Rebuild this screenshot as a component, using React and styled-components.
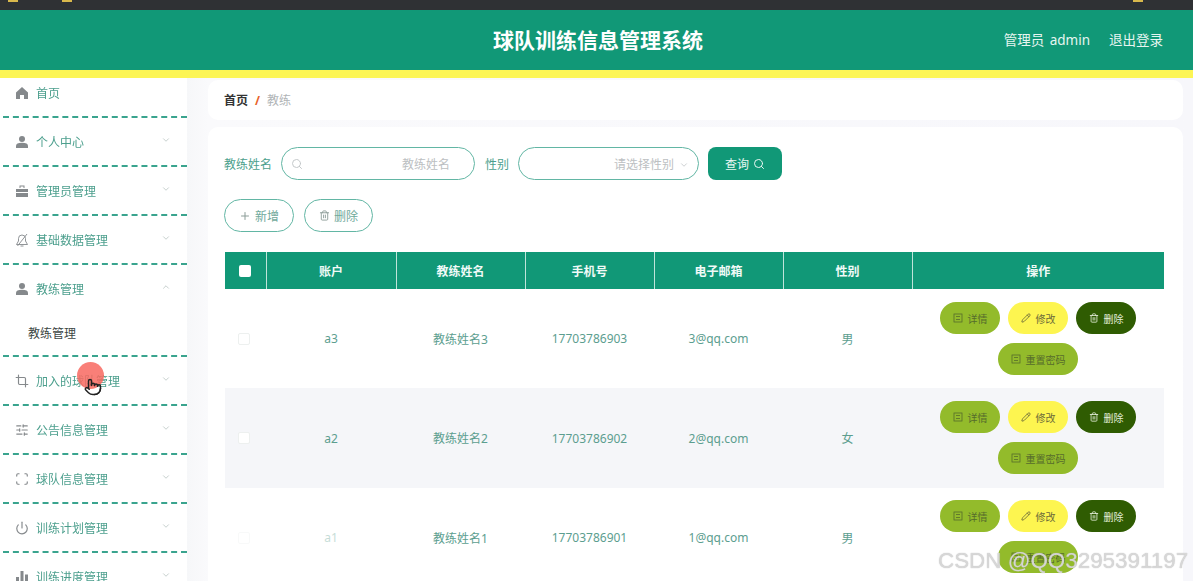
import React from "react";
import styled, { createGlobalStyle } from "styled-components";
import { ChevronDown, ChevronUp, Crop, Pencil, Plus, Pointer, Power, Scan, Search, SlidersHorizontal, Trash2 } from "lucide-react";

const Global = createGlobalStyle`
  html, body { margin: 0; padding: 0; height: 100%; overflow: hidden; background: #f7f7fb; }
  * { box-sizing: border-box; }
  body { font-family: "Noto Sans", "Noto Sans CJK SC", sans-serif; font-size: 12px; }
`;

const Page = styled.div`
  position: relative; width: 1193px; height: 581px; overflow: hidden;
  display: flex; flex-direction: column; filter: blur(0.4px);
`;
const BrowserBar = styled.div`
  height: 10px; background: #2f3134; display: flex; align-items: flex-start; padding: 0 50px 0 8px; gap: 44px; flex: none;
`;
const Folder = styled.i`
  display: block; width: 10px; height: 2px; background: #d8b84c;
  &:nth-child(3) { margin-left: auto; }
`;
const Header = styled.header`
  height: 68px; flex: none; background: #119877; border-bottom: 8px solid #fcf555;
  display: flex; align-items: center; padding: 0 30px 0 0; color: #e6f5f0; position: relative;
`;
const Title = styled.h1`
  margin: 0 0 0 493px; font-size: 21px; line-height: 28px; font-weight: 700; color: #fff; letter-spacing: 0;
`;
const HeaderRight = styled.div`
  margin-left: auto; display: flex; gap: 19px; font-size: 13.5px; line-height: 20px; word-spacing: 2px;
`;
const Body = styled.div`
  flex: 1; display: flex; min-height: 0;
`;
const Side = styled.aside`
  width: 187px; flex: none; background: #fff; overflow: hidden; padding-left: 3px;
`;
const MenuItem = styled.div`
  height: ${p => p.$h || 49}px; border-bottom: 2px dashed #3aa48e; display: flex; align-items: center;
  padding: ${p => p.$first ? "0 0 8px 12px" : "0 0 0 12px"}; color: #4c9f8d; font-size: 12px; position: relative;
  svg.lead { width: 14px; height: 14px; color: #85898c; margin-right: 7px; flex: none; }
  svg.chev { position: absolute; left: 158px; top: 17px; width: 10px; height: 10px; color: #bcc7c4; }
`;
const OpenGroup = styled.div`
  border-bottom: 2px dashed #3aa48e;
`;
const OpenHead = styled(MenuItem)`
  border-bottom: 0; height: 48px;
`;
const SubItem = styled.div`
  height: 42px; padding: 0 0 2px 25px; display: flex; align-items: center; color: #3c4644; font-size: 12px;
`;
const Main = styled.main`
  flex: 1; padding: 2px 10px 0 21px; min-width: 0; background: linear-gradient(90deg, #f6f7f9 0, #fafafc 21px, #f7f7fb 100%);
`;
const Crumb = styled.div`
  height: 40px; background: #fff; border-radius: 10px; padding: 0 16px; display: flex; align-items: center; gap: 6px; color: #b0b4b6;
  b { color: #333; font-weight: 700; }
  em { color: #e8622a; font-style: normal; font-weight: 700; margin: 0 1px; }
`;
const Card = styled.section`
  margin-top: 7px; background: #fff; border-radius: 10px; padding: 20px 19px 0 17px; height: 480px; overflow: hidden;
`;
const Filters = styled.div`
  display: flex; align-items: center; height: 33px; margin-left: -1px;
`;
const Label = styled.label`
  color: #4c9f8d; font-size: 12px; margin-right: ${p => p.$mr || 10}px; margin-left: ${p => p.$ml || 0}px;
`;
const Field = styled.div`
  width: ${p => p.$w}px; height: 33px; border: 1px solid #62b6a4; border-radius: 17px; display: flex; align-items: center;
  justify-content: flex-end; padding: 0 ${p => p.$pr}px 0 10px; color: #bcc0c2; position: relative;
  svg { color: #c4c8ca; flex: none; }
  svg.start { position: absolute; left: 9px; top: 10px; }
  svg.end { position: absolute; right: 9px; top: 12px; }
`;
const QueryBtn = styled.button`
  width: 74px; height: 33px; margin-left: 9px; border: 0; border-radius: 8px; background: #119877; color: #eaf7f3; font: inherit;
  display: flex; align-items: center; justify-content: center; gap: 4px;
`;
const Actions = styled.div`
  display: flex; gap: 10px; margin: 19px 0 20px -1px;
`;
const GhostBtn = styled.button`
  width: ${p => p.$w}px; height: 33px; border: 1px solid #62b6a4; border-radius: 17px; background: #fff; color: #6fa99b; font: inherit;
  display: flex; align-items: center; justify-content: center; gap: 4px;
  svg { color: #8c9d98; }
`;
const Table = styled.table`
  width: 939px; table-layout: fixed; border-collapse: collapse;
`;
const Th = styled.th`
  width: ${p => p.$w ? p.$w + "px" : "auto"}; height: 37px; background: #119877; color: #f0faf7; font-size: 12px; font-weight: 700; padding: 0;
  border-left: 1px solid #bfe4da;
  &:first-child { border-left: 0; }
`;
const Row = styled.tr`
  background: ${p => p.$alt ? "#f5f6f9" : "#fff"};
`;
const Td = styled.td`
  height: ${p => p.$h}px; text-align: center; color: #5c9e8f; font-size: 12px; padding: 0; vertical-align: middle;
  opacity: ${p => p.$faded ? 0.35 : 1};
`;
const ActionTd = styled.td`
  height: ${p => p.$h}px; padding: ${p => p.$top}px 0 0; vertical-align: top;
`;
const HeadCheck = styled.span`
  display: block; width: 12px; height: 12px; margin: 0 auto; background: #fff; border-radius: 2px;
`;
const RowCheck = styled.span`
  display: block; width: 12px; height: 12px; margin: 0 auto 0 13px; background: #fff; border: 1px solid #edf0ef; border-radius: 2px;
`;
const BtnWrap = styled.div`
  display: flex; flex-wrap: wrap; justify-content: center; gap: 9px 8px; padding: 0 20px;
`;
const Pill = styled.button`
  width: ${p => p.$w || 60}px; height: 32px; border: 0; border-radius: 16px; padding: 0; font: inherit; font-size: 10px;
  background: ${p => p.$tone === "y" ? "#fdf550" : p.$tone === "d" ? "#2f5c02" : "#93bb2b"};
  color: ${p => p.$tone === "y" ? "#6b6a3a" : p.$tone === "d" ? "#e5eedb" : "#566c2c"};
  display: flex; align-items: center; justify-content: center; gap: 5px;
`;
const Watermark = styled.div`
  position: absolute; left: 938px; top: 547px; font-family: "Liberation Sans", sans-serif; font-size: 22.4px; line-height: 28px; white-space: nowrap;
  color: rgba(225,225,225,.78); text-shadow: 0 0 1px #aaa;
`;
const Ripple = styled.div`
  position: absolute; left: 77px; top: 362px; width: 27px; height: 27px; border-radius: 50%; background: rgba(248,105,96,.85);
`;
const Hand = styled.div`
  position: absolute; left: 84px; top: 378px; color: #222; line-height: 0;
`;

const Home = p => <svg viewBox="0 0 14 14" {...p}><path fill="currentColor" d="M7 1 1 6.500V13h4V9h4v4h4V6.500z" /></svg>;
const User = p => <svg viewBox="0 0 14 14" {...p}><circle cx="7" cy="4" r="3" fill="currentColor" /><path fill="currentColor" d="M1 13v-2c0-2 2-3.200 6-3.200s6 1.200 6 3.200v2z" /></svg>;
const Case = p => <svg viewBox="0 0 14 14" {...p}><path fill="currentColor" d="M1 5h12v3H1zM1 9h12v4H1zM4.500 4V1.500h5V4H8.500V2.500h-3V4z" /></svg>;
const Bars = p => <svg viewBox="0 0 14 14" {...p}><path fill="currentColor" d="M1 7h3v6H1zM5.500 1h3v12h-3zM10 4.500h3V13h-3z" /></svg>;
const Bell = p => <svg viewBox="0 0 14 14" fill="none" stroke="currentColor" strokeWidth="0.9" {...p}><path d="M1.500 11.500h11L10.500 8V5.500a3.500 3.500 0 0 0-7 0V8zM5.500 13h3M12 1 2.500 13" /></svg>;
const Doc = ({ c = "currentColor" }) => <svg width="10" height="10" viewBox="0 0 10 10" fill="none" stroke={c} strokeWidth="0.8"><rect x="1" y="1" width="8" height="8" /><path d="M3 3.500h4M3 6.500h4" /></svg>;

const menu = [
  { t: "个人中心", I: User },
  { t: "管理员管理", I: Case },
  { t: "基础数据管理", I: Bell },
];
const menu2 = [
  { t: "加入的球队管理", I: Crop },
  { t: "公告信息管理", I: SlidersHorizontal },
  { t: "球队信息管理", I: Scan },
  { t: "训练计划管理", I: Power },
  { t: "训练进度管理", I: Bars },
];
const cols = [41, 130, 129, 129, 129, 129];
const heads = ["账户", "教练姓名", "手机号", "电子邮箱", "性别", "操作"];
const rows = [
  { a: "a3", n: "教练姓名3", p: "17703786903", m: "3@qq.com", s: "男", h: 99, top: 13 },
  { a: "a2", n: "教练姓名2", p: "17703786902", m: "2@qq.com", s: "女", h: 100, top: 13, alt: true },
  { a: "a1", n: "教练姓名1", p: "17703786901", m: "1@qq.com", s: "男", h: 99, top: 12, faded: true },
];

export default function App() {
  return (
    <Page>
      <Global />
      <BrowserBar><Folder /><Folder /><Folder /></BrowserBar>
      <Header>
        <Title>球队训练信息管理系统</Title>
        <HeaderRight><span>管理员 admin</span><span>退出登录</span></HeaderRight>
      </Header>
      <Body>
        <Side>
          <MenuItem $h={40} $first><Home className="lead" />首页</MenuItem>
          {menu.map(({ t, I }) => (
            <MenuItem key={t}><I className="lead" />{t}<ChevronDown className="chev" /></MenuItem>
          ))}
          <OpenGroup>
            <OpenHead><User className="lead" />教练管理<ChevronUp className="chev" /></OpenHead>
            <SubItem>教练管理</SubItem>
          </OpenGroup>
          {menu2.map(({ t, I }) => (
            <MenuItem key={t}><I className="lead" />{t}<ChevronDown className="chev" /></MenuItem>
          ))}
        </Side>
        <Main>
          <Crumb><b>首页</b><em>/</em><span>教练</span></Crumb>
          <Card>
            <Filters>
              <Label $mr={9}>教练姓名</Label>
              <Field $w={194} $pr={24}><Search className="start" size={12} />教练姓名</Field>
              <Label $ml={10} $mr={9}>性别</Label>
              <Field $w={181} $pr={24}>请选择性别<ChevronDown className="end" size={10} /></Field>
              <QueryBtn>查询<Search size={12} /></QueryBtn>
            </Filters>
            <Actions>
              <GhostBtn $w={70}><Plus size={12} />新增</GhostBtn>
              <GhostBtn $w={69}><Trash2 size={11} />删除</GhostBtn>
            </Actions>
            <Table>
              <thead>
                <tr>
                  <Th $w={cols[0]}><HeadCheck /></Th>
                  {heads.map((h, i) => <Th key={h} $w={cols[i + 1]}>{h}</Th>)}
                </tr>
              </thead>
              <tbody>
                {rows.map(r => (
                  <Row key={r.a} $alt={r.alt}>
                    <Td $h={r.h} $faded={r.faded}><RowCheck /></Td>
                    <Td $h={r.h} $faded={r.faded}>{r.a}</Td>
                    <Td $h={r.h}>{r.n}</Td>
                    <Td $h={r.h}>{r.p}</Td>
                    <Td $h={r.h}>{r.m}</Td>
                    <Td $h={r.h}>{r.s}</Td>
                    <ActionTd $h={r.h} $top={r.top}>
                      <BtnWrap>
                        <Pill><Doc />详情</Pill>
                        <Pill $tone="y"><Pencil size={10} />修改</Pill>
                        <Pill $tone="d"><Trash2 size={10} />删除</Pill>
                        <Pill $w={80}><Doc />重置密码</Pill>
                      </BtnWrap>
                    </ActionTd>
                  </Row>
                ))}
              </tbody>
            </Table>
          </Card>
        </Main>
      </Body>
      <Ripple />
      <Hand><Pointer size={18} /></Hand>
      <Watermark>CSDN @QQ3295391197</Watermark>
    </Page>
  );
}
